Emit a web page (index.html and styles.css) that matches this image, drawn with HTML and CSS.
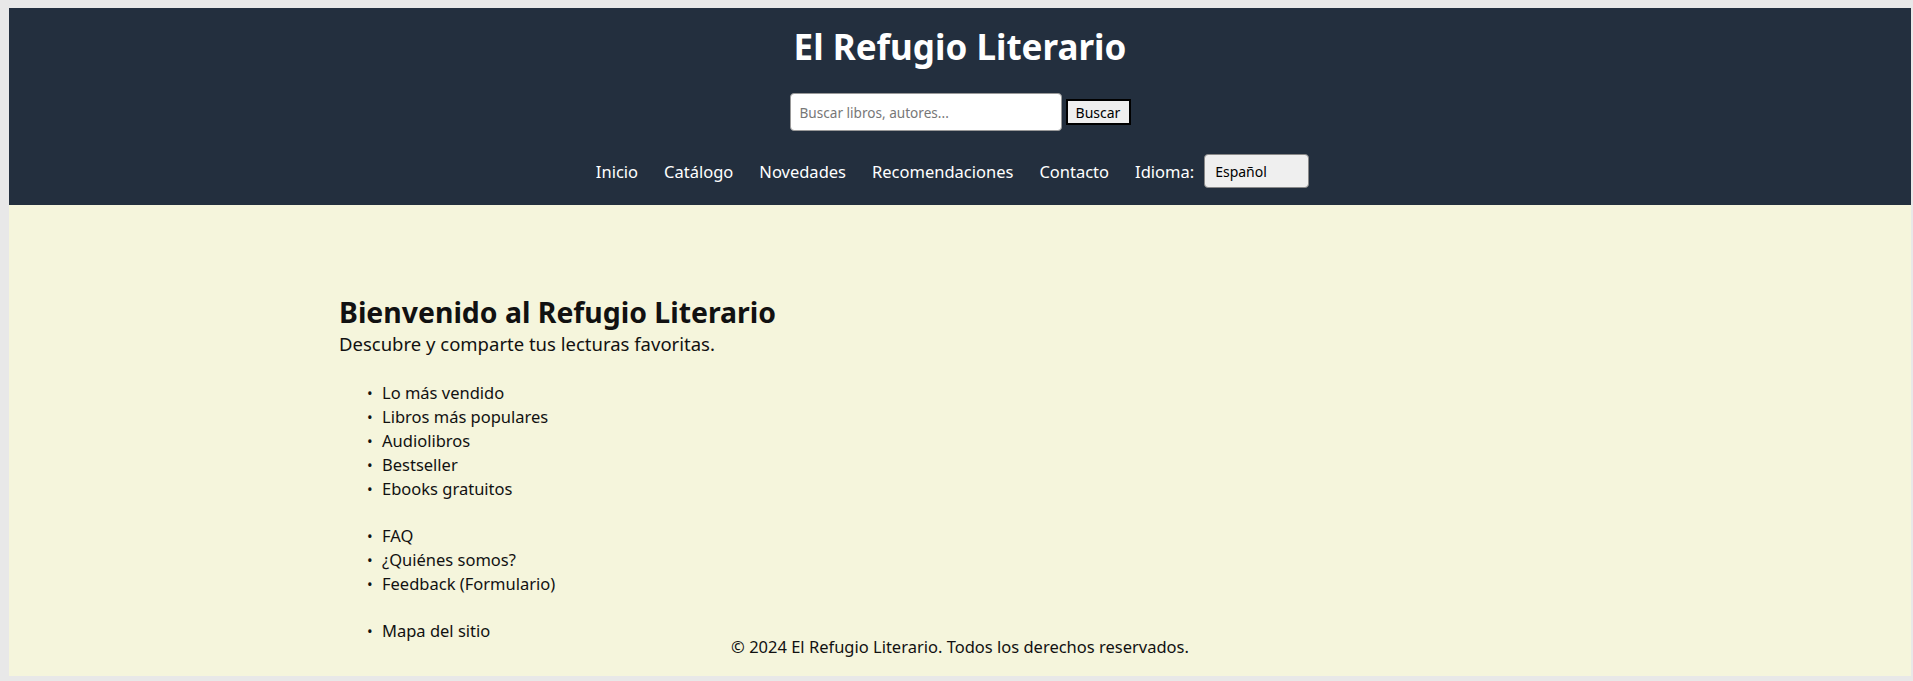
FILE: index.html
```html
<!DOCTYPE html>
<html lang="es">
<head>
<meta charset="utf-8">
<title>El Refugio Literario</title>
<link rel="stylesheet" href="styles.css">
</head>
<body>
<div class="page">
  <header class="site-header">
    <h1 class="site-title">El Refugio Literario</h1>
    <form class="search">
      <input class="search-input" type="text" placeholder="Buscar libros, autores...">
      <button class="search-btn" type="button">Buscar</button>
    </form>
    <nav class="nav">
      <a class="nav-link" href="#">Inicio</a>
      <a class="nav-link" href="#">Catálogo</a>
      <a class="nav-link" href="#">Novedades</a>
      <a class="nav-link" href="#">Recomendaciones</a>
      <a class="nav-link" href="#">Contacto</a>
      <label class="lang-label">Idioma:</label>
      <select class="lang-select"><option>Español</option></select>
    </nav>
  </header>
  <main class="main">
    <h2 class="welcome">Bienvenido al Refugio Literario</h2>
    <p class="lead">Descubre y comparte tus lecturas favoritas.</p>
    <ul class="links">
      <li>Lo más vendido</li>
      <li>Libros más populares</li>
      <li>Audiolibros</li>
      <li>Bestseller</li>
      <li>Ebooks gratuitos</li>
    </ul>
    <ul class="links">
      <li>FAQ</li>
      <li>¿Quiénes somos?</li>
      <li>Feedback (Formulario)</li>
    </ul>
    <ul class="links">
      <li>Mapa del sitio</li>
    </ul>
  </main>
  <footer class="footer">© 2024 El Refugio Literario. Todos los derechos reservados.</footer>
</div>
</body>
</html>
```
FILE: styles.css
```css
html {
  background: #e8e8e8;
}
body {
  margin: 8px 2px 5px 9px;
  font-family: "Noto Sans", sans-serif;
  color: #111;
}
.page {
  background: #f5f5dc;
  height: 668px;
  box-shadow: 0 2px 5px rgba(0,0,0,0.25);
  display: flex;
  flex-direction: column;
}
.site-header {
  background: #232f3e;
  color: #fff;
  text-align: center;
  padding: 16px 0 0;
  height: 197px;
  box-sizing: border-box;
  flex: none;
}
.site-title {
  margin: 0;
  font-size: 35px;
  font-weight: 700;
  line-height: 46px;
}
.search {
  margin-top: 23px;
  display: flex;
  justify-content: center;
  align-items: center;
  gap: 4px;
}
.search-input {
  width: 272px;
  height: 38px;
  box-sizing: border-box;
  border: 1px solid #999;
  border-radius: 4px;
  padding: 0 9px;
  font-family: "Noto Sans", sans-serif;
  font-size: 13.6px;
  background: #fff;
}
.search-input::placeholder {
  color: #777;
}
.search-btn {
  width: 65px;
  height: 26px;
  box-sizing: border-box;
  border: 2px solid #000;
  background: #efefef;
  font-family: "Noto Sans", sans-serif;
  font-size: 14px;
  color: #000;
  padding: 0;
}
.nav {
  margin-top: 23px;
  display: flex;
  justify-content: center;
  align-items: center;
  padding-right: 15px;
  font-size: 16.5px;
}
.nav-link {
  color: #fff;
  text-decoration: none;
  margin-right: 26px;
}
.lang-label {
  margin-right: 10px;
}
.lang-select {
  width: 105px;
  height: 34px;
  border: 1px solid #888;
  border-radius: 4px;
  background: #efefef;
  font-family: "Noto Sans", sans-serif;
  font-size: 14px;
  padding: 0 10px;
  color: #000;
  appearance: none;
}
.main {
  height: 430px;
  padding: 88px 0 0 330px;
  box-sizing: border-box;
  flex: none;
}
.welcome {
  margin: 0;
  font-size: 28.4px;
  font-weight: 700;
  line-height: 38px;
}
.lead {
  margin: 0;
  font-size: 18.5px;
  line-height: 26px;
}
.links {
  margin: 24px 0 0;
  padding-left: 43px;
  font-size: 16.5px;
  line-height: 24px;
  list-style: none;
}
.links li {
  display: flex;
  align-items: baseline;
  height: 24px;
}
.links li::before {
  content: "•";
  flex: none;
  width: 15px;
  margin-left: -15px;
  font-size: 15px;
  line-height: 20px;
}
.links + .links {
  margin-top: 23px;
}
.footer {
  text-align: center;
  font-size: 16.5px;
  line-height: 24px;
}
```
